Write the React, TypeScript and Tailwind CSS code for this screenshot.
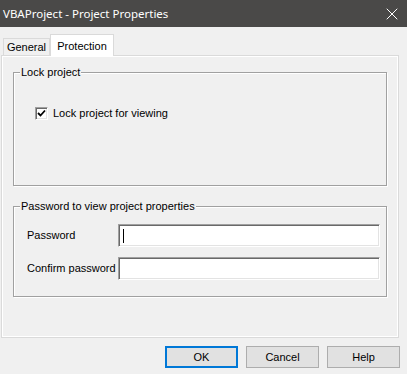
import { X } from 'lucide-react';

const font = { fontFamily: '"Liberation Sans", Arial, sans-serif' };

function GroupBox({ title, className, children }: { title: string; className: string; children?: React.ReactNode }) {
  return (
    <div
      className={`relative w-[374px] border border-[#a0a0a0] shadow-[1px_1px_0_#fff,inset_1px_1px_0_#fff] ${className}`}
    >
      <span className="absolute -top-[8px] left-[6px] bg-[#f0f0f0] px-[1px] text-[11px] leading-[14px] text-black">
        {title}
      </span>
      {children}
    </div>
  );
}

function TextBox({ caret }: { caret?: boolean }) {
  return (
    <div className="w-[262px] h-[23px] bg-white border border-t-[#a0a0a0] border-l-[#a0a0a0] border-b-white border-r-white shadow-[inset_1px_1px_0_#696969,inset_-1px_-1px_0_#e3e3e3] flex items-center pl-[4px]">
      {caret && <div className="w-[1px] h-[14px] bg-black" />}
    </div>
  );
}

function Button({ label, active }: { label: string; active?: boolean }) {
  return (
    <div
      className={`w-[73px] h-[22px] flex items-center justify-center bg-[#e1e1e1] text-[11px] text-black ${
        active ? 'border-2 border-[#0078d7]' : 'border border-[#adadad]'
      }`}
    >
      {label}
    </div>
  );
}

export default function App() {
  return (
    <div className="w-[407px] h-[374px] bg-[#f0f0f0] flex flex-col overflow-hidden" style={font}>
      {/* title bar */}
      <div className="h-[27px] bg-[#4a4948] flex items-center justify-between pl-[3px] pr-[5px]">
        <span className="text-white text-[11.5px]" style={{ fontFamily: '"Noto Sans", sans-serif' }}>
          VBAProject - Project Properties
        </span>
        <X className="w-[20px] h-[20px] text-white" strokeWidth={1.2} />
      </div>

      {/* tabs */}
      <div className="mt-[7px] pl-[3px] flex items-end relative z-10">
        <div className="w-[47px] h-[17px] border border-b-0 border-[#dadada] flex items-center justify-center text-[11px] text-black">
          General
        </div>
        <div className="w-[64px] h-[22px] -mb-[1px] border border-b-0 border-[#dadada] bg-white flex items-start justify-center pt-[3px] text-[11px] text-black">
          Protection
        </div>
      </div>

      {/* panel */}
      <div className="ml-[1px] w-[398px] h-[283px] border border-[#dadada] shadow-[inset_1px_1px_0_#fff,inset_-1px_-1px_0_#fff] pt-[16px] pl-[11px]">
        <GroupBox title="Lock project" className="h-[114px]">
          <div className="flex items-center gap-[5px] ml-[21px] mt-[32px]">
            <div className="w-[13px] h-[13px] bg-white border border-t-[#a0a0a0] border-l-[#a0a0a0] border-b-white border-r-white shadow-[inset_1px_1px_0_#696969,inset_-1px_-1px_0_#e3e3e3] flex items-center justify-center">
              <svg width="9" height="9" viewBox="0 0 9 9">
                <path d="M1 4 L3.5 6.5 L8 1.5" fill="none" stroke="#000" strokeWidth="1.8" />
              </svg>
            </div>
            <span className="text-[11px] text-black">Lock project for viewing</span>
          </div>
        </GroupBox>

        <GroupBox title="Password to view project properties" className="h-[91px] mt-[20px]">
          <div className="flex flex-col gap-[10px] mt-[17px] pl-[13px]">
            <div className="flex items-center">
              <span className="w-[91px] text-[11px] text-black">Password</span>
              <TextBox caret />
            </div>
            <div className="flex items-center">
              <span className="w-[91px] text-[11px] text-black">Confirm password</span>
              <TextBox />
            </div>
          </div>
        </GroupBox>
      </div>

      {/* buttons */}
      <div className="mt-[8px] flex justify-end gap-[8px] pr-[7px]">
        <Button label="OK" active />
        <Button label="Cancel" />
        <Button label="Help" />
      </div>
    </div>
  );
}
